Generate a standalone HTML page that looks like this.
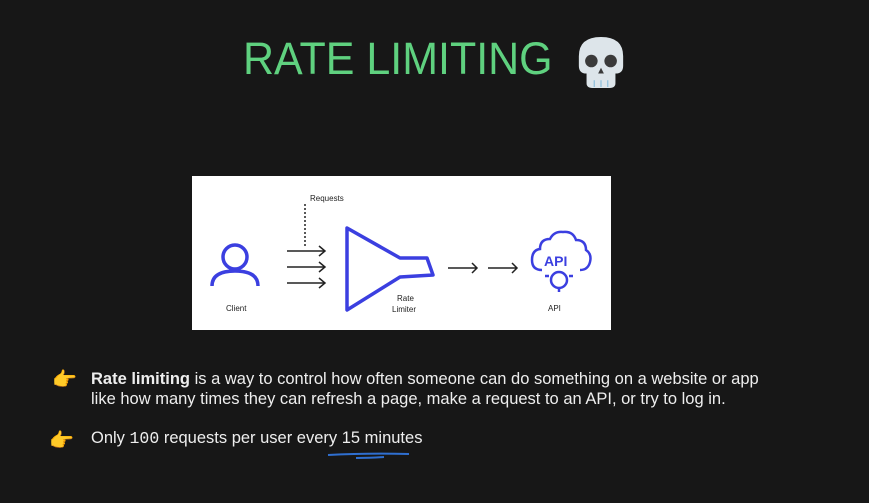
<!DOCTYPE html>
<html><head><meta charset="utf-8"><style>
body{margin:0;width:869px;height:503px;background:#171717;overflow:hidden;position:relative;font-family:"Liberation Sans",sans-serif}
.t{position:absolute;left:243px;top:33px;font-size:45px;color:#5fd17f;letter-spacing:0px;white-space:nowrap;font-weight:normal;transform:scaleX(0.955);transform-origin:left}
.box{position:absolute;left:192px;top:176px;width:419px;height:154px;background:#fff}
.p{position:absolute;color:#eee;font-size:16.5px;line-height:20px;white-space:nowrap}
.hand{position:absolute}
</style></head><body>
<div class="t">RATE LIMITING</div>
<svg style="position:absolute;left:575px;top:35px" width="52" height="54" viewBox="0 0 54 56">
<path d="M4 22 Q4 2 27 2 Q50 2 50 22 V32 Q50 40 42 40 V50 Q42 55 36 55 H18 Q12 55 12 50 V40 Q4 40 4 32 Z" fill="#dde5ea"/>
<circle cx="17" cy="27" r="6.5" fill="#3a3a3a"/><circle cx="37" cy="27" r="6.5" fill="#3a3a3a"/>
<path d="M24 40 L27 34 L30 40 Z" fill="#3a3a3a"/>
<path d="M20 47v7M27 47v7M34 47v7" stroke="#8fc0dc" stroke-width="1.3"/>
</svg>
<div class="box">
<svg width="419" height="154" viewBox="0 0 419 154" font-family="Liberation Sans,sans-serif">
<g fill="none" stroke="#3b3fe0" stroke-width="3.5" stroke-linejoin="round">
<circle cx="43" cy="81" r="12"/>
<path d="M20 110 Q20 95 43 95 Q66 95 66 110"/>
<path d="M155 52 L208 82 H235 L241 99 L208 101 L155 134 Z"/>
</g>
<g fill="none" stroke="#222" stroke-width="1.5">
<path d="M113 28 V72" stroke-dasharray="2 2"/>
<path d="M95 75H133M127 70l6 5-6 5M95 91H133M127 86l6 5-6 5M95 107H133M127 102l6 5-6 5"/>
<path d="M256 92H285M280 87l5 5-5 5M296 92H325M320 87l5 5-5 5"/>
</g>
<g fill="none" stroke="#3b3fe0" stroke-width="2.5">
<path d="M350 94 Q340 94 340 84 Q340 74 348 73 Q348 63 358 63 Q362 55 371 56 Q381 55 384 64 Q394 64 394 74 Q400 78 398 86 Q396 94 388 94"/>
<circle cx="367" cy="104" r="8"/><path d="M357 100h-4M381 100h-4M367 116v-4"/>
</g>
<text x="352" y="90" font-size="14" font-weight="bold" fill="#3b3fe0">API</text>
<text x="118" y="25" font-size="8" fill="#222">Requests</text>
<text x="34" y="135" font-size="8" fill="#222">Client</text>
<text x="205" y="125" font-size="8" fill="#222">Rate</text>
<text x="200" y="136" font-size="8" fill="#222">Limiter</text>
<text x="356" y="135" font-size="8" fill="#222">API</text>
</svg>
</div>
<div class="hand" style="left:52px;top:367px;font-size:20px">👉</div>
<div class="p" style="left:91px;top:369px"><b>Rate limiting</b> is a way to control how often someone can do something on a website or app<br>like how many times they can refresh a page, make a request to an API, or try to log in.</div>
<div class="hand" style="left:49px;top:428px;font-size:20px">👉</div>
<div class="p" style="left:91px;top:428px">Only <span style="font-family:'Liberation Mono',monospace">100</span> requests per user every 15 minutes</div>
<svg style="position:absolute;left:326px;top:452px" width="86" height="10"><path d="M2 3 Q40 1 83 2 M30 6 Q45 6 58 5" stroke="#2f6fd0" stroke-width="2" fill="none"/></svg>
</body></html>
